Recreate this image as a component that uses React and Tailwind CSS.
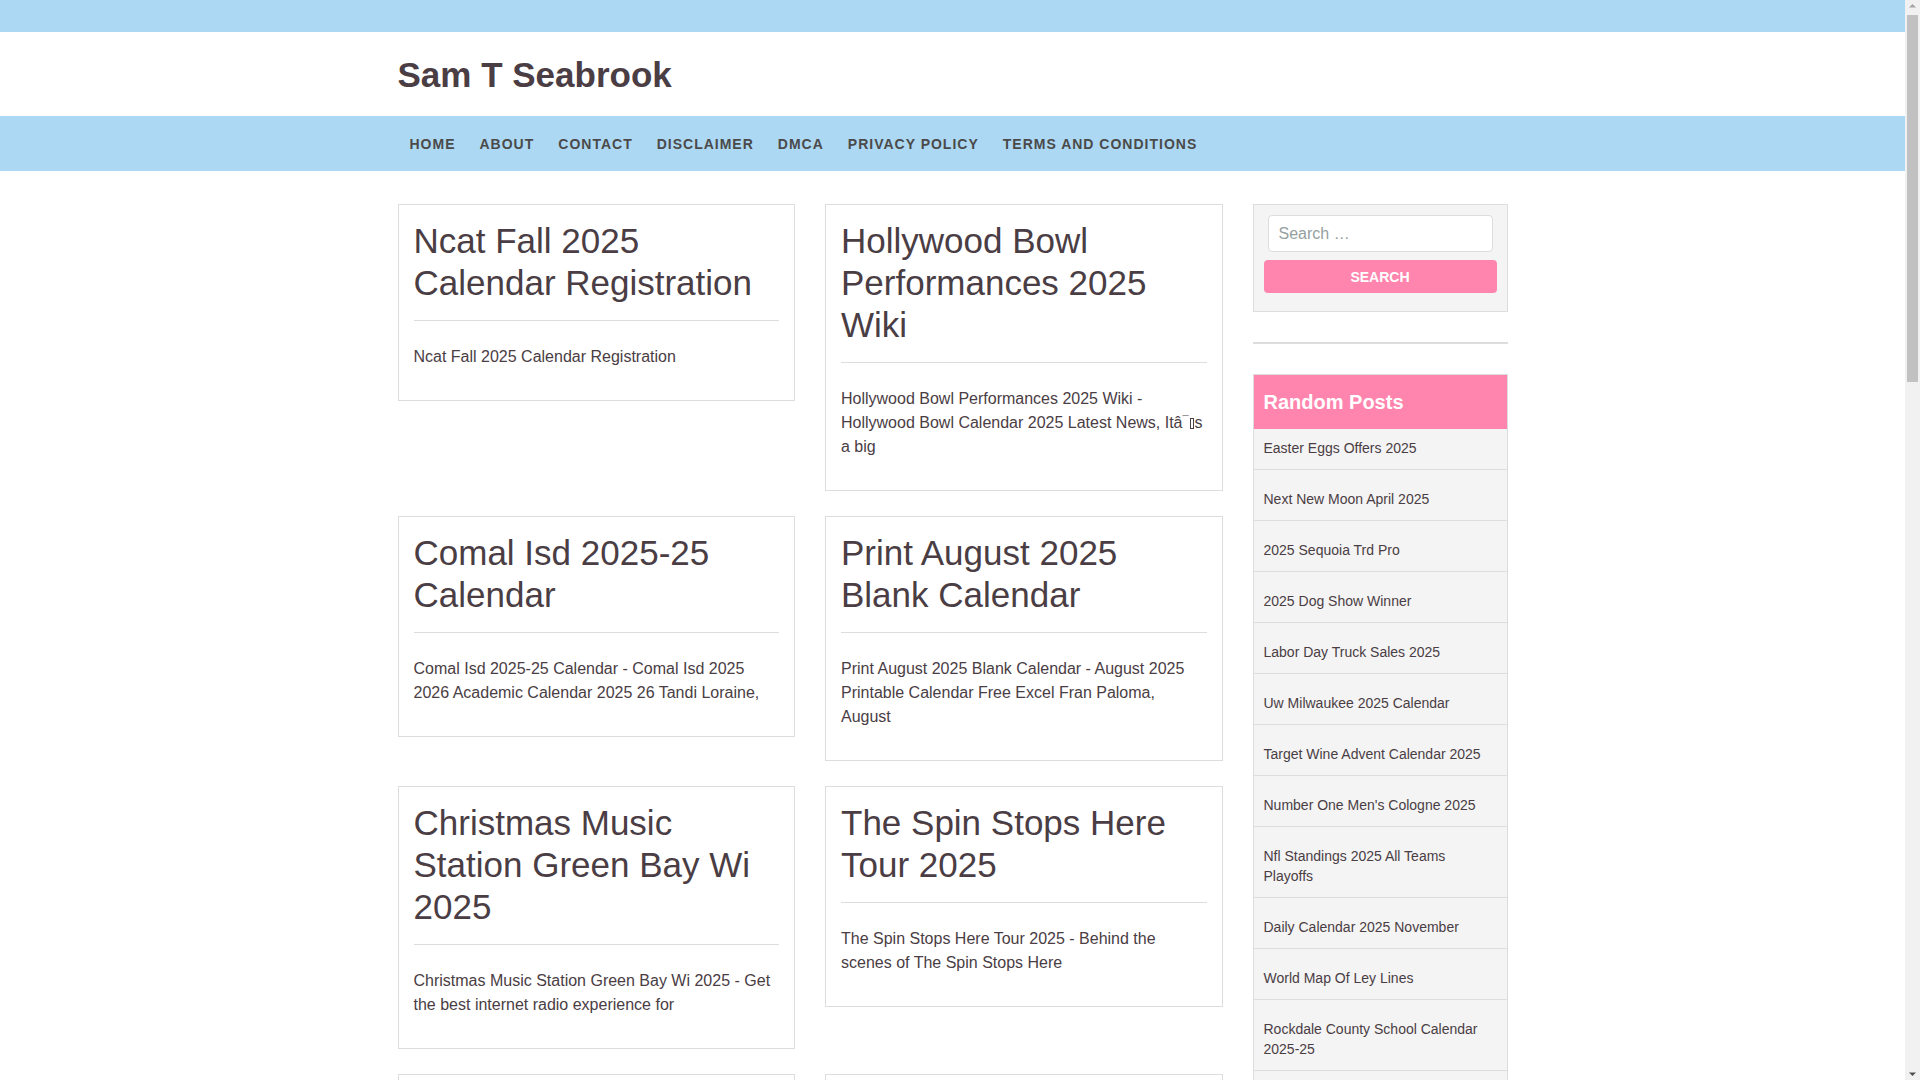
import React from 'react'

// ── dados da página ──
const NAV = ['Home', 'About', 'Contact', 'Disclaimer', 'DMCA', 'Privacy Policy', 'Terms and Conditions']

const POSTS = [
  {
    title: 'Ncat Fall 2025 Calendar Registration',
    excerpt: 'Ncat Fall 2025 Calendar Registration',
  },
  {
    title: 'Hollywood Bowl Performances 2025 Wiki',
    excerpt: (
      <>
        Hollywood Bowl Performances 2025 Wiki - Hollywood Bowl Calendar 2025 Latest News, Itâ
        <span className="align-[4px] text-[11px] leading-none">¯</span>
        <span className="mx-px inline-block h-[11px] w-[4px] border border-[#4a3d44] align-[-1px]" />s a big
      </>
    ),
  },
  {
    title: 'Comal Isd 2025-25 Calendar',
    excerpt: 'Comal Isd 2025-25 Calendar - Comal Isd 2025 2026 Academic Calendar 2025 26 Tandi Loraine,',
  },
  {
    title: 'Print August 2025 Blank Calendar',
    excerpt: 'Print August 2025 Blank Calendar - August 2025 Printable Calendar Free Excel Fran Paloma, August',
  },
  {
    title: 'Christmas Music Station Green Bay Wi 2025',
    excerpt: 'Christmas Music Station Green Bay Wi 2025 - Get the best internet radio experience for',
  },
  {
    title: 'The Spin Stops Here Tour 2025',
    excerpt: 'The Spin Stops Here Tour 2025 - Behind the scenes of The Spin Stops Here',
  },
  {
    title: 'Chinese New Year 2025 Animal Sign',
    excerpt: 'Chinese New Year 2025 Animal Sign - Year of the Snake, what it means for you',
  },
  {
    title: 'Best Time To Visit Japan 2025',
    excerpt: 'Best Time To Visit Japan 2025 - Cherry blossom forecast and travel tips',
  },
]

const RANDOM = [
  'Easter Eggs Offers 2025',
  'Next New Moon April 2025',
  '2025 Sequoia Trd Pro',
  '2025 Dog Show Winner',
  'Labor Day Truck Sales 2025',
  'Uw Milwaukee 2025 Calendar',
  'Target Wine Advent Calendar 2025',
  "Number One Men's Cologne 2025",
  'Nfl Standings 2025 All Teams Playoffs',
  'Daily Calendar 2025 November',
  'World Map Of Ley Lines',
  'Rockdale County School Calendar 2025-25',
  'Full Moon Calendar 2025 Uk',
  'Super Bowl 2025 Halftime Show',
]

function PostCard({ post }) {
  return (
    <article className="border border-[#ddd] bg-white p-[15px]">
      <h2 className="text-[35px] leading-[42px] font-normal">{post.title}</h2>
      <hr className="mt-4 border-[#ddd]" />
      <p className="mt-6 mb-4 text-base leading-6">{post.excerpt}</p>
    </article>
  )
}

// barra de rolagem clássica do navegador
function Scrollbar() {
  return (
    <div className="flex w-[15px] shrink-0 flex-col items-center bg-[#f1f1f1]">
      <svg width="15" height="15" viewBox="0 0 15 15">
        <path d="M4 7.5 L7.5 4 L11 7.5 Z" fill="#a3a3a3" />
      </svg>
      <div className="h-[367px] w-[11px] bg-[#c1c1c1]" />
      <div className="flex-1" />
      <svg width="15" height="15" viewBox="0 0 15 15">
        <path d="M4 7.5 L7.5 11 L11 7.5 Z" fill="#505050" />
      </svg>
    </div>
  )
}

export default function App() {
  return (
    <div
      className="flex h-screen overflow-hidden bg-white text-[#4a3d44]"
      style={{ fontFamily: '"Liberation Sans", Arial, sans-serif' }}
    >
      <div className="min-w-0 flex-1 overflow-hidden">
        {/* faixa superior */}
        <div className="h-8 bg-[#add8f3]" />

        {/* cabeçalho */}
        <header className="mx-auto flex h-[84px] w-[1140px] items-center px-[15px]">
          <h1 className="text-[35px] font-bold leading-none">Sam T Seabrook</h1>
        </header>

        {/* menu */}
        <nav className="bg-[#add8f3]">
          <ul className="mx-auto flex h-[55px] w-[1140px] items-center px-[15px]">
            {NAV.map(item => (
              <li
                key={item}
                className="px-3 text-sm font-bold uppercase tracking-[1px] text-[#4a4a4a]"
              >
                {item}
              </li>
            ))}
          </ul>
        </nav>

        {/* conteúdo */}
        <main className="mx-auto mt-[33px] flex w-[1140px] items-start gap-[30px] px-[15px] pb-16">
          <div className="grid w-[825px] grid-cols-2 items-start gap-x-[30px] gap-y-[25px]">
            {POSTS.map(p => (
              <PostCard key={p.title} post={p} />
            ))}
          </div>

          <aside className="flex w-[255px] flex-col">
            {/* busca */}
            <div className="border border-[#ddd] bg-[#f4f4f4] px-[10px] pt-[10px] pb-[18px]">
              <input
                type="search"
                placeholder="Search …"
                className="mx-[4px] block h-[37px] w-[225px] rounded border border-[#ddd] bg-white px-[10px] text-base text-[#4a3d44] placeholder:text-[#95a0a0] outline-none"
              />
              <button className="mt-2 block h-[33px] w-full rounded bg-[#ff85ae] text-sm font-bold uppercase text-white">
                Search
              </button>
            </div>

            <div className="my-[30px] h-[2px] bg-[#ddd]" />

            {/* posts aleatórios */}
            <section className="border border-[#ddd] bg-[#f4f4f4]">
              <h3 className="flex h-[54px] items-center bg-[#ff85ae] px-[10px] text-[20px] font-bold text-white">
                Random Posts
              </h3>
              <ul>
                {RANDOM.map((r, i) => (
                  <li
                    key={r}
                    className={
                      'border-b border-[#ddd] px-[10px] pb-[11px] text-sm leading-5 ' +
                      (i === 0 ? 'pt-[9px]' : 'pt-[19px]')
                    }
                  >
                    {r}
                  </li>
                ))}
              </ul>
            </section>
          </aside>
        </main>

        <footer className="bg-[#add8f3] py-6 text-center text-sm text-[#4a4a4a]">
          Copyright © 2025 Sam T Seabrook
        </footer>
      </div>

      <Scrollbar />
    </div>
  )
}
